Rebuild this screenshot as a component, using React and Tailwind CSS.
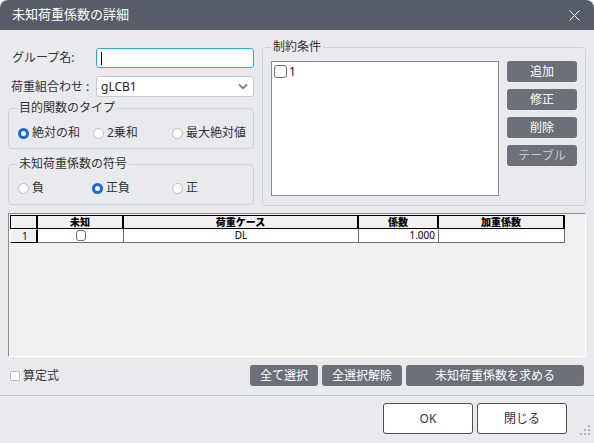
import { useState } from "react";

const FONT = { fontFamily: '"Noto Sans", "Noto Sans CJK JP", sans-serif' };

function Radio({ checked, label, className = "" }) {
  return (
    <label className={"flex items-center gap-[3px] text-[12px] leading-[16px] text-[#333] " + className}>
      {checked ? (
        <span className="w-[11px] h-[11px] rounded-full border-[3.5px] border-[#1769e0] bg-white" />
      ) : (
        <span className="w-[11px] h-[11px] rounded-full border border-[#b8bcc2] bg-white" />
      )}
      {label}
    </label>
  );
}

function Box() {
  return <span className="inline-block w-[10px] h-[11px] rounded-[3px] border border-[#6d6d6d] bg-white" />;
}

function DarkButton({ children, className = "", dim }) {
  return (
    <button
      className={
        "h-[21px] rounded-[3px] bg-[#6b7079] text-[12px] leading-none " +
        (dim ? "text-[#c3c6cb] " : "text-white ") +
        className
      }
    >
      {children}
    </button>
  );
}

function GroupBox({ title, className = "", children }) {
  return (
    <fieldset className={"border border-[#cfd2d7] rounded-[4px] " + className}>
      <legend className="ml-[8px] px-[2px] text-[12px] leading-[16px] text-[#333]">{title}</legend>
      {children}
    </fieldset>
  );
}

export default function App() {
  const [objective] = useState("abs");
  const [sign] = useState("both");

  return (
    <div className="w-[594px] h-[443px] bg-white" style={FONT}>
      <div className="relative w-full h-full rounded-t-[8px] overflow-hidden bg-[#e9eaee] flex flex-col">
        {/* title bar */}
        <div className="h-[30px] shrink-0 bg-[#565d66] flex items-center justify-between pl-[12px] pr-[14px]">
          <span className="text-white text-[13px]">未知荷重係数の詳細</span>
          <svg width="11" height="11" viewBox="0 0 11 11">
            <path d="M0.5 0.5L10.5 10.5M10.5 0.5L0.5 10.5" stroke="#fff" strokeWidth="1" />
          </svg>
        </div>

        {/* upper area */}
        <div className="flex pt-[9px] px-[8px]">
          <div className="w-[246px] flex flex-col">
            <div className="mt-[9px] h-[20px] flex items-center">
              <span className="pl-[4px] text-[12px] text-[#333]">グループ名:</span>
              <div className="ml-auto w-[158px] h-[20px] border border-[#2ea6df] rounded-[3px] bg-white flex items-center pl-[4px]">
                <span className="w-px h-[13px] bg-black" />
              </div>
            </div>
            <div className="mt-[8px] h-[21px] flex items-center">
              <span className="pl-[3px] text-[12px] text-[#333]">荷重組合わせ :</span>
              <div className="ml-auto w-[158px] h-[21px] border border-[#c9cbcf] rounded-[3px] bg-white flex items-center pl-[4px] pr-[5px]">
                <span className="text-[12px] text-[#222]">gLCB1</span>
                <svg className="ml-auto" width="10" height="7" viewBox="0 0 10 7">
                  <path d="M1 1.5L5 5.2L9 1.5" fill="none" stroke="#7a7f87" strokeWidth="1.8" />
                </svg>
              </div>
            </div>

            <GroupBox title="目的関数のタイプ" className="mt-[3px] h-[49px]">
              <div className="flex pt-[9px] pl-[9px]">
                <Radio checked={objective === "abs"} label="絶対の和" className="w-[75px]" />
                <Radio checked={objective === "sq"} label="2乗和" className="w-[79px]" />
                <Radio checked={objective === "max"} label="最大絶対値" />
              </div>
            </GroupBox>

            <GroupBox title="未知荷重係数の符号" className="mt-[7px] h-[49px]">
              <div className="flex pt-[8px] pl-[9px]">
                <Radio checked={sign === "neg"} label="負" className="w-[74px]" />
                <Radio checked={sign === "both"} label="正負" className="w-[80px]" />
                <Radio checked={sign === "pos"} label="正" />
              </div>
            </GroupBox>
          </div>

          <GroupBox title="制約条件" className="ml-[8px] w-[324px] h-[167px]">
            <div className="flex pt-[6px] pl-[8px]">
              <div className="w-[228px] h-[135px] border border-[#8a8d92] bg-white">
                <div className="flex items-center gap-[2px] pl-[2px] pt-[3px] text-[12px] leading-[12px] text-[#222]">
                  <span className="inline-block w-[13px] h-[13px] rounded-[3px] border border-[#6d6d6d] bg-white" />
                  1
                </div>
              </div>
              <div className="ml-[8px] w-[70px] flex flex-col gap-[7px]">
                <DarkButton>追加</DarkButton>
                <DarkButton>修正</DarkButton>
                <DarkButton>削除</DarkButton>
                <DarkButton dim>テーブル</DarkButton>
              </div>
            </div>
          </GroupBox>
        </div>

        {/* grid */}
        <div className="mt-[7px] mx-[8px] h-[144px] border-t border-l border-[#8e8e8e] border-r border-b border-r-white border-b-white bg-[#f0f0f0] p-[1px]">
          <div className="w-[555px] text-[10px] leading-[12px] text-black">
            <div className="flex h-[14px] font-black">
              <div className="w-[28px] bg-[#f0f0f0] border border-black border-r-2" />
              <div className="w-[86px] bg-[#f0f0f0] border-y border-r-2 border-black text-center">未知</div>
              <div className="w-[235px] bg-[#f0f0f0] border-y border-r-2 border-black text-center">荷重ケース</div>
              <div className="w-[80px] bg-[#f0f0f0] border-y border-r-2 border-black text-center">係数</div>
              <div className="w-[126px] bg-[#f0f0f0] border-y border-r-2 border-black text-center">加重係数</div>
            </div>
            <div className="flex h-[14px]">
              <div className="w-[28px] bg-[#f0f0f0] border-l border-t border-white border-r-2 border-r-black border-b border-b-black pl-[11px]">1</div>
              <div className="w-[86px] bg-white border-r border-b border-[#6e6e6e] flex justify-center items-center">
                <Box />
              </div>
              <div className="w-[235px] bg-white border-r border-b border-[#6e6e6e] text-center">DL</div>
              <div className="w-[80px] bg-white border-r border-b border-[#6e6e6e] text-right pr-[3px]">1.000</div>
              <div className="w-[126px] bg-white border-r border-b border-[#6e6e6e]" />
            </div>
          </div>
        </div>

        {/* bottom actions */}
        <div className="mt-[8px] flex items-center px-[10px]">
          <label className="flex items-center gap-[3px] text-[12px] text-[#333]">
            <span className="inline-block w-[10px] h-[10px] rounded-[2px] border border-[#b8bcc2] bg-white" />
            算定式
          </label>
          <div className="ml-auto flex gap-[4px]">
            <DarkButton className="w-[68px]">全て選択</DarkButton>
            <DarkButton className="w-[80px]">全選択解除</DarkButton>
            <DarkButton className="w-[178px]">未知荷重係数を求める</DarkButton>
          </div>
        </div>

        <div className="mt-[9px] h-px bg-[#c6c9ce]" />

        <div className="mt-[7px] flex justify-end gap-[4px] pr-[27px]">
          <button className="w-[90px] h-[31px] rounded-[3px] border border-[#4d4f53] bg-white text-[12px] text-[#333]">OK</button>
          <button className="w-[90px] h-[31px] rounded-[3px] border border-[#4d4f53] bg-white text-[12px] text-[#333]">閉じる</button>
        </div>

        {/* size grip */}
        <svg className="absolute right-[4px] bottom-[8px]" width="10" height="10" viewBox="0 0 10 10">
          <rect x="8" y="0" width="2" height="2" fill="#b4b7bc" />
          <rect x="4" y="4" width="2" height="2" fill="#b4b7bc" />
          <rect x="8" y="4" width="2" height="2" fill="#b4b7bc" />
          <rect x="0" y="8" width="2" height="2" fill="#b4b7bc" />
          <rect x="4" y="8" width="2" height="2" fill="#b4b7bc" />
          <rect x="8" y="8" width="2" height="2" fill="#b4b7bc" />
        </svg>
      </div>
    </div>
  );
}
